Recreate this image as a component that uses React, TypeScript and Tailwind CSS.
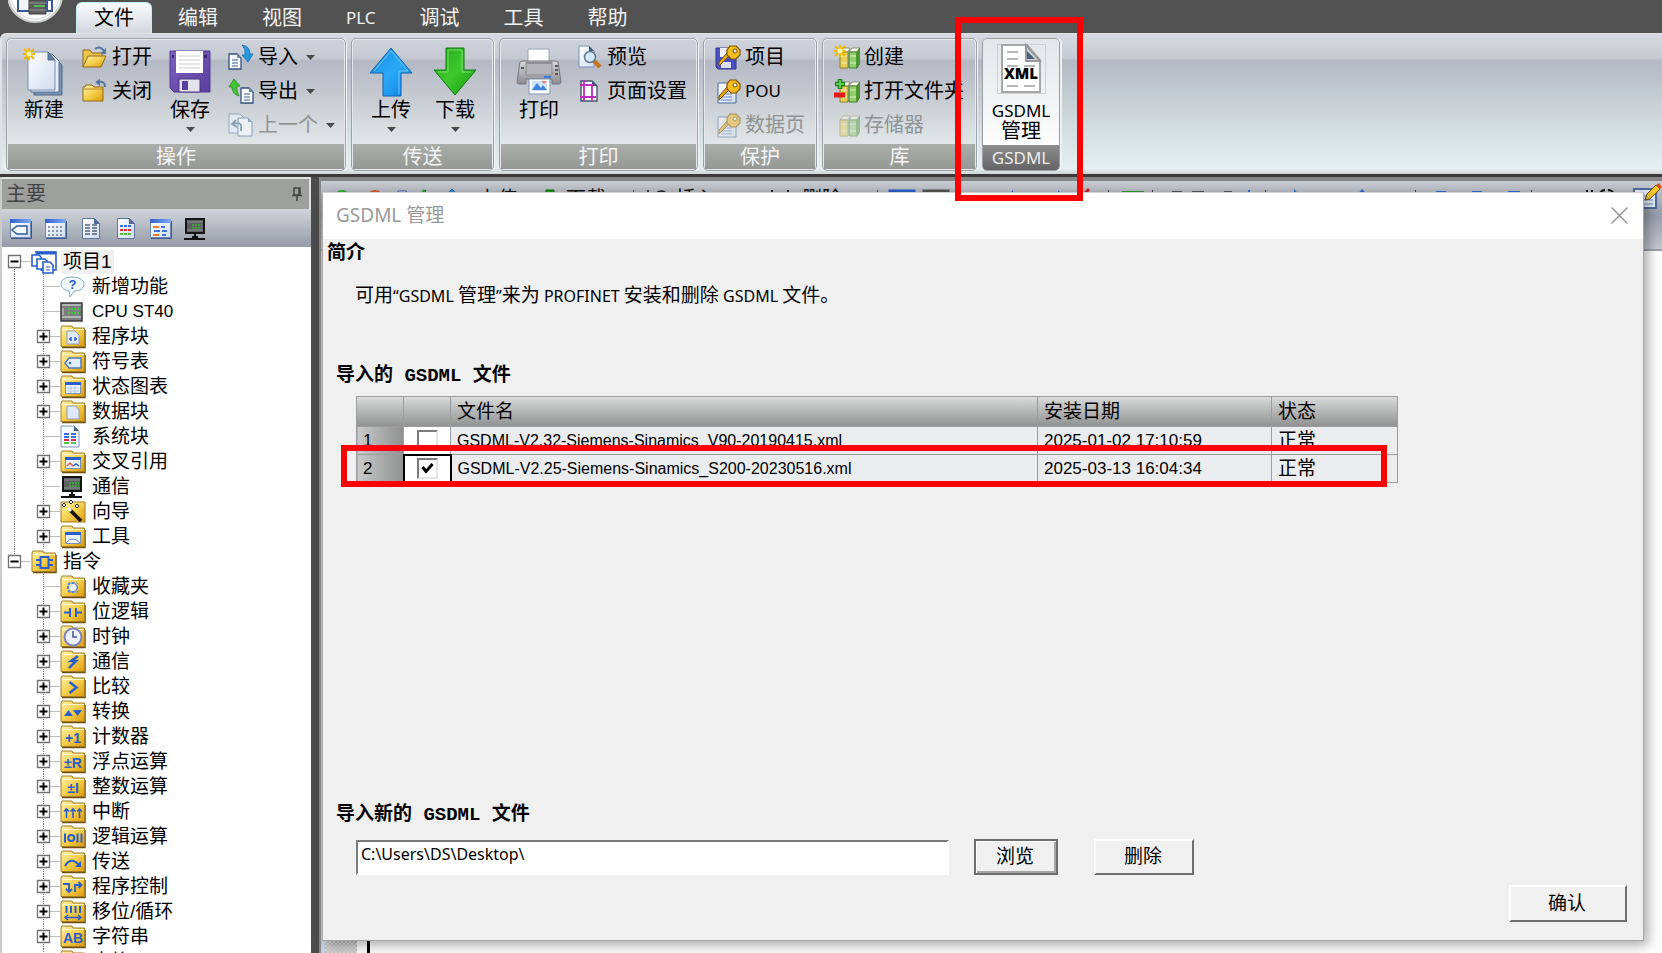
import React, { useState } from "react";

/* ---------- Gradients shared by the drawings ---------- */

function Defs() {
  return (
    <svg className="absolute h-0 w-0" aria-hidden="true">
      <defs>
        <linearGradient id="gold" x1="0" y1="0" x2="1" y2="1">
          <stop offset="0" stopColor="#fff3ae" />
          <stop offset="0.5" stopColor="#f5cf4e" />
          <stop offset="1" stopColor="#dd9a08" />
        </linearGradient>
        <linearGradient id="paper" x1="0" y1="0" x2="1" y2="1">
          <stop offset="0" stopColor="#ffffff" />
          <stop offset="1" stopColor="#cfdcf0" />
        </linearGradient>
        <linearGradient id="blueBar" x1="0" y1="0" x2="1" y2="0">
          <stop offset="0" stopColor="#2f62cf" />
          <stop offset="1" stopColor="#7fa8f2" />
        </linearGradient>
        <linearGradient id="upBlue" x1="0" y1="0" x2="1" y2="1">
          <stop offset="0" stopColor="#1787dc" />
          <stop offset="0.5" stopColor="#2aa9f8" />
          <stop offset="1" stopColor="#0f80de" />
        </linearGradient>
        <linearGradient id="downGreen" x1="0" y1="0" x2="1" y2="1">
          <stop offset="0" stopColor="#1fa31a" />
          <stop offset="0.5" stopColor="#3fc92c" />
          <stop offset="1" stopColor="#129a10" />
        </linearGradient>
        <linearGradient id="purple" x1="0" y1="0" x2="1" y2="1">
          <stop offset="0" stopColor="#7d5fc0" />
          <stop offset="1" stopColor="#5b3f9e" />
        </linearGradient>
        <linearGradient id="metal" x1="0" y1="0" x2="0" y2="1">
          <stop offset="0" stopColor="#d8d8dc" />
          <stop offset="1" stopColor="#8a8a90" />
        </linearGradient>
      </defs>
    </svg>
  );
}

/* ---------- Ribbon drawings ---------- */

const Spark = ({ x, y }: { x: number; y: number }) => (
  <g transform={`translate(${x} ${y})`} stroke="#f0b800" strokeWidth="2">
    <path d="M0 -6V6M-6 0H6M-5 -5L5 5M-5 5L5 -5" />
    <circle r="2.5" fill="#fff7b0" stroke="none" />
  </g>
);

const NewIcon = () => (
  <svg width="44" height="50" viewBox="0 0 44 50">
    <path d="M12 10h20l8 8v30H12z" fill="#7b93b3" stroke="#4d6788" />
    <path d="M9 7h21l7 7v31H9z" fill="#e6eefa" stroke="#56708f" />
    <path d="M6 5h20l7 8v30H6z" fill="url(#paper)" stroke="#7b8fae" />
    <path d="M26 5v8h7z" fill="#5f7fa6" stroke="#56708f" />
    <Spark x={7} y={7} />
  </svg>
);

const SaveIcon = () => (
  <svg width="44" height="50" viewBox="0 0 44 50">
    <path d="M2 4h40v41H6l-4-4z" fill="url(#purple)" stroke="#533a94" />
    <path d="M8 4h27v22H8z" fill="#fdfdfd" />
    <path d="M11 9h21M11 13h21M11 17h21M11 21h21" stroke="#cfcfd4" />
    <path d="M11 32h21v13H11z" fill="#e4e2ea" stroke="#4b3585" />
    <path d="M14 34h6v9h-6z" fill="#5b3f9e" />
    <path d="M36 8h3v3h-3zM4 8h2v3H4z" fill="#3d2878" />
  </svg>
);

const UpIcon = () => (
  <svg width="44" height="50" viewBox="0 0 44 50">
    <path d="M22 1L43 26H32V49H14V26H1z" fill="url(#upBlue)" stroke="#0c63b4" strokeLinejoin="round" />
    <path d="M22 4L39 24H30V47" fill="none" stroke="#7fd0ff" strokeWidth="1" opacity="0.8" />
    <path d="M5 24L22 4" stroke="#7fd0ff" opacity="0.8" />
  </svg>
);

const DownIcon = () => (
  <svg width="44" height="50" viewBox="0 0 44 50">
    <path d="M13 1H31V23H43L22 48L1 23H13z" fill="url(#downGreen)" stroke="#0c7a0c" strokeLinejoin="round" />
    <path d="M15 3H29V25H38" fill="none" stroke="#8be67a" opacity="0.8" />
    <path d="M5 25H15V3" fill="none" stroke="#8be67a" opacity="0.8" />
  </svg>
);

const PrinterIcon = () => (
  <svg width="46" height="50" viewBox="0 0 46 50">
    <path d="M12 2h21v14H12z" fill="#fff" stroke="#9aa3b3" />
    <path d="M4 15q1-1 3-1h32q2 0 3 1l3 20q0 2-2 2h-7V32H10v5H3q-2 0-2-2z" fill="url(#metal)" stroke="#77777d" />
    <path d="M10 15h26v13H10z" fill="#b4b4b9" stroke="#8b8b90" />
    <path d="M10 16h26" stroke="#8f8f95" strokeWidth="2" />
    <path d="M5 21h3M39 19h3M39 23h3M39 27h3" stroke="#55555a" strokeWidth="2" />
    <path d="M28 30h7" stroke="#2f7be0" strokeWidth="2" />
    <path d="M13 32h21v15H13z" fill="#fff" stroke="#7f93ad" />
    <path d="M16 34h15v10H16z" fill="#cfe4fb" />
    <path d="M16 43l5-7 4 5 2-3 4 5z" fill="#3d83e0" />
    <path d="M25 34l3 3 3-3z" fill="#f08060" />
  </svg>
);

const OpenIcon = () => (
  <svg width="26" height="24" viewBox="0 0 26 24">
    <path d="M1 22V5h7l2 3h10v4" fill="#f2c44a" stroke="#93691a" />
    <path d="M1 22L6 11h18l-5 11z" fill="url(#gold)" stroke="#93691a" />
    <path d="M13 4q5-4 9 2" fill="none" stroke="#53779e" strokeWidth="2" />
    <path d="M24 3v6h-6z" fill="#53779e" />
  </svg>
);

const CloseIcon = () => (
  <svg width="26" height="24" viewBox="0 0 26 24">
    <path d="M1 22V8h2l1-2h6l2 2h9v14z" fill="url(#gold)" stroke="#93691a" />
    <path d="M1 10h20" stroke="#b9872a" />
    <path d="M17 3q6-1 6 5" fill="none" stroke="#53779e" strokeWidth="2" />
    <path d="M18 0v7l-5-4z" fill="#53779e" />
  </svg>
);

const SmallPage = ({ x, y }: { x: number; y: number }) => (
  <g transform={`translate(${x} ${y})`}>
    <path d="M0 0h8l4 4v11H0z" fill="#f7faff" stroke="#33517d" strokeWidth="1.3" />
    <path d="M8 0v4h4z" fill="#6d8bb5" />
    <path d="M3 6h6M3 9h6M3 12h6" stroke="#3a5c92" />
  </g>
);

const ImportIcon = () => (
  <svg width="26" height="26" viewBox="0 0 26 26">
    <SmallPage x={1} y={10} />
    <path d="M14 1q8 1 8 9h3l-5 8-6-7h3q1-6-3-10z" fill="#2a97e0" stroke="#1869ae" strokeWidth="0.8" />
  </svg>
);

const ExportIcon = () => (
  <svg width="26" height="26" viewBox="0 0 26 26">
    <SmallPage x={13} y={10} />
    <path d="M11 18Q4 16 4 9H1L6 1l6 7H9q-1 5 2 10z" fill="#43c433" stroke="#1f8d1b" strokeWidth="0.8" />
  </svg>
);

const PrevIcon = () => (
  <svg width="26" height="26" viewBox="0 0 26 26" opacity="0.75">
    <path d="M1 2h11l4 4v15H1z" fill="#e8eff8" stroke="#8397b2" />
    <path d="M10 6h10l4 4v14H10z" fill="#f4f8fc" stroke="#6f86a6" />
    <path d="M20 6v4h4z" fill="#7f96b3" />
    <path d="M13 19v-6q-2-3-8-1M8 8l-4 4 5 3" fill="none" stroke="#6f8bad" strokeWidth="1.8" />
  </svg>
);

const PreviewIcon = () => (
  <svg width="26" height="26" viewBox="0 0 26 26">
    <path d="M2 2h10l5 5v16H2z" fill="url(#paper)" stroke="#7d92b0" />
    <path d="M12 2v5h5z" fill="#3d5a80" />
    <path d="M17 17l6 6" stroke="#c8701a" strokeWidth="4" />
    <circle cx="13" cy="13" r="5.5" fill="#d3e8fa" stroke="#62788f" strokeWidth="1.5" />
  </svg>
);

const PageSetupIcon = () => (
  <svg width="26" height="26" viewBox="0 0 26 26">
    <path d="M4 3h11l5 5v15H4z" fill="#fff" stroke="#44546e" strokeWidth="1.4" />
    <path d="M15 3v5h5z" fill="#44546e" />
    <path d="M7 2v21M15 6v17M3 7h13M3 19h16" stroke="#c22bc0" strokeWidth="1.8" />
  </svg>
);

const Key = () => (
  <g>
    <path d="M14 12L4 22v-4L13 8z" fill="#e9a90e" stroke="#7d5200" strokeWidth="1" />
    <path d="M15 2h6l4 4v5l-4 4h-5l-4-4V6z" fill="#f7bd1c" stroke="#7d5200" strokeWidth="1.2" />
    <circle cx="20" cy="7" r="2" fill="#fff" stroke="#7d5200" />
  </g>
);

const KeyDiskIcon = () => (
  <svg width="26" height="26" viewBox="0 0 26 26">
    <path d="M1 4h20v21H3l-2-2z" fill="#4a4fc2" stroke="#31348f" />
    <path d="M5 4h12v9H5z" fill="#f1f1fa" />
    <path d="M6 18h10v6H6z" fill="#dcdcf0" />
    <Key />
  </svg>
);

const KeyPageIcon = ({ faded = false }: { faded?: boolean }) => (
  <svg width="26" height="26" viewBox="0 0 26 26" opacity={faded ? 0.5 : 1}>
    <path d="M3 5h13l5 5v15H3z" fill="url(#paper)" stroke="#4c6a96" />
    <path d="M6 16h11M6 19h11M6 22h11" stroke="#6a8abf" />
    <Key />
  </svg>
);

const Books = () => (
  <g>
    <path d="M6 8l3-4h7l-2 4zM15 8l3-4h8l-3 4z" fill="#fdfdf3" stroke="#8f8f70" />
    <path d="M6 8h8v16H6z" fill="#e5cf57" stroke="#92802a" />
    <path d="M15 8h8v16h-8z" fill="#8fce68" stroke="#42832a" />
    <path d="M23 8l3-4v15l-3 5z" fill="#4f9b35" stroke="#42832a" />
    <path d="M7 12h6M16 12h6M7 19h6M16 19h6" stroke="#fff" opacity="0.7" />
  </g>
);

const LibNewIcon = () => (
  <svg width="26" height="26" viewBox="0 0 26 26">
    <Books />
    <Spark x={6} y={7} />
  </svg>
);
const LibOpenIcon = () => (
  <svg width="26" height="26" viewBox="0 0 26 26">
    <Books />
    <path d="M6 1v10M1 6h10" stroke="#1d7d1d" strokeWidth="4.5" />
    <path d="M6 2v8M2 6h8" stroke="#5fd04d" strokeWidth="2" />
    <path d="M0 17h11" stroke="#e01818" strokeWidth="5" />
  </svg>
);
const LibMemIcon = () => (
  <svg width="26" height="26" viewBox="0 0 26 26" opacity="0.45">
    <Books />
  </svg>
);

const XmlIcon = () => (
  <svg width="50" height="52" viewBox="0 0 50 52">
    <path d="M1.5 1.5h48v49h-48z" fill="none" stroke="#d0d0d2" />
    <path d="M6 2h25l13 15v32H6z" fill="#fff" stroke="#a6a6a8" strokeWidth="2" />
    <path d="M30 2v16h14z" fill="#d5d5d8" stroke="#98989c" strokeWidth="2" />
    <path d="M31 8l8 8h-8z" fill="#47627f" />
    <path d="M11 9h11M11 16h11M11 23h11M28 23h11M11 43h11M28 43h11" stroke="#b7b7ba" strokeWidth="2" />
    <text x="25" y="36" textAnchor="middle" fontSize="15" fontWeight="800" fontFamily="Open Sans, sans-serif" fill="#000">
      XML
    </text>
  </svg>
);

const Logo = () => (
  <svg width="56" height="24" viewBox="0 0 56 24">
    <circle cx="27" cy="-5" r="27" fill="#f3f4f4" stroke="#c9caca" strokeWidth="2" />
    <circle cx="27" cy="-5" r="24" fill="#fff" stroke="#dcdcdc" />
    <path d="M10 0v11h14V0" fill="#f2f6fc" stroke="#38598f" strokeWidth="2" />
    <path d="M21 0h17v14H21z" fill="#5c5f5e" stroke="#3d3f3e" />
    <path d="M26 6h11" stroke="#57b755" strokeWidth="2" />
    <path d="M21 3h17M21 10h17" stroke="#8d918f" />
    <path d="M39 0h5v11h-5z" fill="#fff" stroke="#38598f" strokeWidth="2" />
  </svg>
);

/* ---------- Ribbon building blocks ---------- */

const Caret = () => (
  <svg width="9" height="5" viewBox="0 0 9 5" aria-hidden="true">
    <path d="M0 0h9L4.500 5z" fill="#4a4a4a" />
  </svg>
);

function BigButton({ icon, label, menu = false }: { icon: React.ReactNode; label: string; menu?: boolean }) {
  return (
    <button type="button" className="flex w-15 flex-col items-center pt-1.5">
      <span className="flex h-[52px] items-center">{icon}</span>
      <span className="text-xl leading-6 whitespace-nowrap">{label}</span>
      {menu && (
        <span className="flex h-3.5 items-center">
          <Caret />
        </span>
      )}
    </button>
  );
}

function SmallButton({
  icon,
  label,
  menu = false,
  latin = false,
  disabled = false,
}: {
  icon: React.ReactNode;
  label: string;
  menu?: boolean;
  latin?: boolean;
  disabled?: boolean;
}) {
  return (
    <button
      type="button"
      disabled={disabled}
      className="flex h-[34px] items-center gap-1 whitespace-nowrap disabled:text-[#8f9496]"
    >
      {icon}
      <span className={latin ? "text-[17px] leading-6" : "text-xl leading-6"}>{label}</span>
      {menu && (
        <span className="ml-1">
          <Caret />
        </span>
      )}
    </button>
  );
}

const Stack = ({ children }: { children: React.ReactNode }) => <div className="flex flex-col">{children}</div>;

function Group({ label, width, pad, children }: { label: string; width: string; pad: string; children: React.ReactNode }) {
  return (
    <section
      aria-label={label}
      className={`flex flex-col overflow-hidden rounded-[5px] border border-[#9ea2a8] shadow-[inset_0_0_0_1px_#e6e9ec,1px_0_0_#f2f5f6] ${width}`}
    >
      <div
        className={`m-px mb-0 flex flex-1 items-start rounded-t bg-[linear-gradient(#ced2da_0,#c4c8d1_18%,#b4b9c4_20%,#c3c8cf_50%,#e1e7e8_100%)] ${pad}`}
      >
        {children}
      </div>
      <div className="mx-px mb-px h-[25px] bg-linear-to-b from-[#acaeac] to-[#969896] text-center text-xl leading-[25px] text-[#f4f4f4]">
        {label}
      </div>
    </section>
  );
}

function Ribbon() {
  return (
    <div className="flex h-[141px] gap-[5px] rounded-tl-md border-t border-l-2 border-[#dfe2e6] bg-[linear-gradient(#d6dae0_0,#c6cad2_17%,#b4bac5_19%,#c8d0d6_50%,#e6f0f0_96%,#d0d4d4_100%)] pt-1 pb-[3px] pl-1">
      <Group label="操作" width="w-[340px]" pad="gap-2 pl-1.5">
        <BigButton icon={<NewIcon />} label="新建" />
        <Stack>
          <SmallButton icon={<OpenIcon />} label="打开" />
          <SmallButton icon={<CloseIcon />} label="关闭" />
        </Stack>
        <BigButton icon={<SaveIcon />} label="保存" menu />
        <Stack>
          <SmallButton icon={<ImportIcon />} label="导入" menu />
          <SmallButton icon={<ExportIcon />} label="导出" menu />
          <SmallButton icon={<PrevIcon />} label="上一个" menu disabled />
        </Stack>
      </Group>
      <Group label="传送" width="w-[143px]" pad="gap-1 pl-2">
        <BigButton icon={<UpIcon />} label="上传" menu />
        <BigButton icon={<DownIcon />} label="下载" menu />
      </Group>
      <Group label="打印" width="w-[199px]" pad="gap-2 pl-2">
        <BigButton icon={<PrinterIcon />} label="打印" />
        <Stack>
          <SmallButton icon={<PreviewIcon />} label="预览" />
          <SmallButton icon={<PageSetupIcon />} label="页面设置" />
        </Stack>
      </Group>
      <Group label="保护" width="w-[114px]" pad="pl-2.5">
        <Stack>
          <SmallButton icon={<KeyDiskIcon />} label="项目" />
          <SmallButton icon={<KeyPageIcon />} label="POU" latin />
          <SmallButton icon={<KeyPageIcon faded />} label="数据页" disabled />
        </Stack>
      </Group>
      <Group label="库" width="w-[155px]" pad="pl-2.5">
        <Stack>
          <SmallButton icon={<LibNewIcon />} label="创建" />
          <SmallButton icon={<LibOpenIcon />} label="打开文件夹" />
          <SmallButton icon={<LibMemIcon />} label="存储器" disabled />
        </Stack>
      </Group>
      <section
        aria-label="GSDML"
        className="relative flex w-[78px] flex-col rounded-[5px] border border-[#9a9da1] shadow-[2px_0_0_#eef2f3]"
      >
        <button
          type="button"
          className="flex flex-1 flex-col items-center rounded-t bg-linear-to-b from-[#e4e6ea] to-[#fdfdfd] pt-1"
        >
          <XmlIcon />
          <span className="pt-1.5 text-[17px] leading-5">GSDML</span>
          <span className="text-xl leading-5">管理</span>
        </button>
        <div className="h-[25px] rounded-b bg-linear-to-b from-[#8e8f8e] to-[#636463] text-center text-[17px] leading-[25px] text-[#ececec]">
          GSDML
        </div>
        <div className="pointer-events-none absolute -top-[22px] -right-[24px] -bottom-[31px] -left-[28px] z-30 border-6 border-[#fe0000]" />
      </section>
    </div>
  );
}

const MENU = ["编辑", "视图", "PLC", "调试", "工具", "帮助"];

function MenuBar() {
  return (
    <nav aria-label="菜单" className="flex h-[33px] items-end bg-[#525252] pl-2">
      <button type="button" aria-label="应用程序菜单" className="self-start">
        <Logo />
      </button>
      <a
        href="#file"
        className="ml-3 flex h-[31px] items-center rounded-t-md border border-b-0 border-[#c5eef2] bg-linear-to-b from-[#fafbfc] to-[#d3d7de] px-[17px] text-xl text-black"
      >
        文件
      </a>
      <div className="ml-[26px] flex h-[31px] items-center gap-11 text-xl text-[#f2f2f2]">
        {MENU.map((m) => (
          <a key={m} href={"#" + m} className={m === "PLC" ? "text-[17px]" : "text-xl"}>
            {m}
          </a>
        ))}
      </div>
    </nav>
  );
}

/* ---------- Project tree ---------- */

const B = "#2a5fcb";

const Folder = ({ children }: { children?: React.ReactNode }) => (
  <svg width="26" height="24" viewBox="0 0 26 24" className="shrink-0">
    <path d="M2 22.500h23V5" fill="none" stroke="#6c5012" strokeWidth="1.5" />
    <path d="M1 21.500V3l1-2h10l1 2h11.500v18.500z" fill="url(#gold)" stroke="#a67d22" />
    <path d="M2 4.500h22" stroke="#fff8cf" />
    <g transform="translate(0 -1)">{children}</g>
  </svg>
);

const Glyph = ({ d, w = 2 }: { d: string; w?: number }) => <path d={d} fill="none" stroke={B} strokeWidth={w} />;
const Mark = ({ children }: { children: string }) => (
  <text x="13" y="19" textAnchor="middle" fontSize="14" fontWeight="700" fontFamily="Liberation Sans, sans-serif" fill={B}>
    {children}
  </text>
);
const Win = ({ children }: { children?: React.ReactNode }) => (
  <g>
    <path d="M5.500 8.500h15v11h-15z" fill="#e9f1fd" stroke="#7791bd" />
    <path d="M5 8h16v3H5z" fill={B} />
    {children}
  </g>
);

const ProjectIcon = () => (
  <svg width="26" height="24" viewBox="0 0 26 24" className="shrink-0" fill="#fff" stroke="#2a5fcb" strokeWidth="1.6">
    <path d="M5 2h20v18H10z" />
    <path d="M5 3h20" strokeWidth="3" />
    <path d="M1 5h7l2 2v9H1z" />
    <path d="M6 9h8l2 2v8H6z" />
    <path d="M12 12h7l3 3v8H12z" />
    <path d="M15 17h4M15 20h4" strokeWidth="1" />
  </svg>
);
const HelpIcon = () => (
  <svg width="26" height="24" viewBox="0 0 26 24" className="shrink-0">
    <path d="M12 2C6 2 1 4.500 1 9s4 6 8 7l1 6 4-6c6 0 10-2.500 10-7S18 2 12 2z" fill="#eef8fd" stroke="#86a9bd" />
    <text x="12.500" y="14" textAnchor="middle" fontSize="13" fontWeight="700" fontFamily="Liberation Sans, sans-serif" fill={B}>
      ?
    </text>
  </svg>
);
const CpuIcon = () => (
  <svg width="26" height="24" viewBox="0 0 26 24" className="shrink-0">
    <path d="M1 3h21v18H1z" fill="#7c7e7e" stroke="#3b3b3b" strokeWidth="1.500" />
    <path d="M2 5h19M2 17h19" stroke="#b2b4b4" strokeWidth="2" />
    <path d="M8 9h12M8 13h12" stroke="#2fdc2f" strokeWidth="1.500" strokeDasharray="2 1" />
    <path d="M3 8v7" stroke="#a9a9a9" strokeWidth="2" />
  </svg>
);
const SystemIcon = () => (
  <svg width="26" height="24" viewBox="0 0 26 24" className="shrink-0">
    <path d="M1 1h13l5 5v16H1z" fill="#f3f8ff" stroke="#7f96b8" />
    <path d="M14 1v5h5z" fill="#3d5c8f" />
    <g strokeWidth="2">
      <path d="M4 9h5M11 9h5M4 12h5M11 12h5" stroke="#3670e0" />
      <path d="M4 15h5M11 15h5" stroke="#e0264a" />
      <path d="M4 18h5M11 18h5" stroke="#57c53f" />
    </g>
  </svg>
);
const CommIcon = () => (
  <svg width="26" height="24" viewBox="0 0 26 24" className="shrink-0">
    <path d="M3 2h18v14H3z" fill="#5d6060" stroke="#151515" strokeWidth="2" />
    <path d="M4 5h16M4 13h16" stroke="#8d9090" />
    <path d="M9 8h10M9 11h10" stroke="#2fb92f" strokeWidth="1.500" strokeDasharray="2 1" />
    <path d="M12 16v5M9 20h6" stroke="#111" strokeWidth="2" />
    <path d="M1 22h21" stroke="#111" strokeWidth="2" />
  </svg>
);
const WizardIcon = () => (
  <svg width="26" height="24" viewBox="0 0 26 24" className="shrink-0">
    <path d="M1 2h24v20H1z" fill="url(#gold)" stroke="#a67d22" />
    <path d="M10 10l11 11" stroke="#111" strokeWidth="3.500" />
    <path d="M8 8l3 3" stroke="#fff" strokeWidth="3" />
    <path d="M4 3l2 2-2 2-2-2zM11 0l2 2-2 2-2-2zM17 4l2 2-2 2-2-2z" fill="#fff" stroke="#222" />
  </svg>
);

type Node = { label: string; icon: React.ReactNode; leaf?: boolean };

const PROJECT: Node[] = [
  { label: "新增功能", icon: <HelpIcon />, leaf: true },
  { label: "CPU ST40", icon: <CpuIcon />, leaf: true },
  {
    label: "程序块",
    icon: (
      <Folder>
        <path d="M7 7h8l4 4v9H7z" fill="#dfe9f8" stroke="#8b9fbe" />
        <Glyph d="M9 15h2v-2v4M17 15h-2v-2v4" w={1.5} />
      </Folder>
    ),
  },
  {
    label: "符号表",
    icon: (
      <Folder>
        <path d="M9 9h12v10H9l-4-5z" fill="#e3eefc" stroke="#4c78c8" strokeWidth="1.500" />
        <circle cx="10" cy="14" r="1.200" fill={B} />
      </Folder>
    ),
  },
  { label: "状态图表", icon: <Folder><Win><path d="M7 14h12M7 17h12M11 12v7M15 12v7" stroke="#b9c9e4" /></Win></Folder> },
  { label: "数据块", icon: <Folder><path d="M7 7h9l3 4v9H7z" fill="#dfe9f8" stroke="#8b9fbe" /></Folder> },
  { label: "系统块", icon: <SystemIcon />, leaf: true },
  {
    label: "交叉引用",
    icon: (
      <Folder>
        <Win>
          <path d="M7 17l3-3 3 3" fill="none" stroke="#e05a4a" strokeWidth="1.500" />
          <path d="M13 17l3-2 3 2" fill="none" stroke={B} strokeWidth="1.500" />
        </Win>
      </Folder>
    ),
  },
  { label: "通信", icon: <CommIcon />, leaf: true },
  { label: "向导", icon: <WizardIcon /> },
  { label: "工具", icon: <Folder><Win><path d="M6 19q7-8 14 0" fill="#fff" stroke="#5d86d3" /></Win></Folder> },
];

const INSTRUCTIONS: Node[] = [
  {
    label: "收藏夹",
    icon: (
      <Folder>
        <path d="M13 8v11M7 13.500h12M8.500 9l9 9M8.500 18l9-9" stroke="#4f86f0" strokeWidth="3" strokeDasharray="2 1" />
        <circle cx="13" cy="13.500" r="3.500" fill="#eaf3ff" />
      </Folder>
    ),
    leaf: true,
  },
  { label: "位逻辑", icon: <Folder><Glyph d="M4 13.500h6M10 9v9M16 9v9M16 13.500h6" /></Folder> },
  {
    label: "时钟",
    icon: (
      <Folder>
        <circle cx="13" cy="13" r="8.500" fill="#eef0fa" stroke="#7d83c4" strokeWidth="2" />
        <path d="M13 7v6h4" fill="none" stroke="#4a4f94" strokeWidth="1.500" />
      </Folder>
    ),
  },
  { label: "通信", icon: <Folder><Glyph d="M18 7l-7 5h5l-7 7" w={2.5} /></Folder> },
  { label: "比较", icon: <Folder><Glyph d="M9.500 8l7 5.500-7 5.500" w={2.5} /></Folder> },
  { label: "转换", icon: <Folder><path d="M4 17l4.500-6 4.500 6zM13 11h9l-4.500 6z" fill={B} /></Folder> },
  { label: "计数器", icon: <Folder><Mark>+1</Mark></Folder> },
  { label: "浮点运算", icon: <Folder><Mark>±R</Mark></Folder> },
  { label: "整数运算", icon: <Folder><Mark>±I</Mark></Folder> },
  { label: "中断", icon: <Folder><Glyph d="M6.500 19V10M13 19V10M19.500 19V10M4 12.500l2.500-2.500 2.500 2.500M10.500 12.500l2.500-2.500 2.500 2.500M17 12.500l2.500-2.500 2.500 2.500" w={1.600} /></Folder> },
  {
    label: "逻辑运算",
    icon: (
      <Folder>
        <Glyph d="M5 9.500v9M17.500 9.500v9M21.500 9.500v9" />
        <circle cx="11.300" cy="14" r="3" fill="none" stroke={B} strokeWidth="2" />
      </Folder>
    ),
  },
  { label: "传送", icon: <Folder><Glyph d="M5 17q6-10 14-1" /><path d="M15 18h6v-6z" fill={B} /></Folder> },
  { label: "程序控制", icon: <Folder><Glyph d="M3 10h6v8M6 15l3 3 3-3M15 18v-7h6M18.500 8l3 3-3 3" w={1.800} /></Folder> },
  { label: "移位/循环", icon: <Folder><Glyph d="M6.500 7v7M11 7v7M15.500 7v7M20 7v7" /><Glyph d="M5 18.500h16M8 16l-3 2.500 3 2.500M18 16l3 2.500-3 2.500" w={1.500} /></Folder> },
  { label: "字符串", icon: <Folder><Mark>AB</Mark></Folder> },
  { label: "表格", icon: <Folder><Win /></Folder> },
];

/* Dotted guides and the plus / minus box to the left of a tree entry. */
function Branch({
  root = false,
  leaf = false,
  open = false,
  outer = "none",
}: {
  root?: boolean;
  leaf?: boolean;
  open?: boolean;
  outer?: "none" | "down" | "up" | "full";
}) {
  const w = root ? 31 : 60;
  const cx = root ? 14.5 : 43.5;
  const outerLine = { none: "", down: "M14.5 12V25", up: "M14.5 0V12", full: "M14.5 0V25" }[outer];
  return (
    <svg width={w} height="25" viewBox={`0 0 ${w} 25`} className="shrink-0">
      <g stroke="#7a7a7a" strokeDasharray="1 1" fill="none">
        <path d={outerLine} />
        {!root && <path d="M43.500 0V25" />}
        <path d={`M${cx} 12.500H${w}`} />
      </g>
      {!leaf && (
        <g fill="none">
          <path d={`M${cx - 6} 6.500h12v12h-12z`} fill="#fff" stroke="#707070" strokeWidth="1.300" />
          <path d={`M${cx - 4} 12.500h8`} stroke="#000" strokeWidth="2" />
          {!open && <path d={`M${cx} 8.500v8`} stroke="#000" strokeWidth="2" />}
        </g>
      )}
    </svg>
  );
}

function TreeItem({ node, inner }: { node: Node; inner: boolean }) {
  const branch = <Branch leaf={node.leaf} outer={inner ? "full" : "none"} />;
  return (
    <li className="flex h-[25px] items-center">
      {node.leaf ? (
        branch
      ) : (
        <button type="button" aria-label={"展开 " + node.label}>
          {branch}
        </button>
      )}
      {node.icon}
      <span className="pl-1.5 whitespace-nowrap">
        {node.label === "CPU ST40" ? <span className="font-['Liberation_Sans'] text-[17px]">{node.label}</span> : node.label}
      </span>
    </li>
  );
}

function TreeRoot({
  label,
  icon,
  nodes,
  first = false,
}: {
  label: string;
  icon: React.ReactNode;
  nodes: Node[];
  first?: boolean;
}) {
  const [open, setOpen] = useState(true);
  return (
    <li>
      <div className="flex h-[25px] items-center">
        <button type="button" aria-label={(open ? "折叠 " : "展开 ") + label} onClick={() => setOpen(!open)}>
          <Branch root open={open} outer={first ? "down" : "up"} />
        </button>
        {icon}
        <span className={first ? "ml-1 bg-[#f0f0f0] px-0.5 leading-6" : "ml-1 px-0.5 leading-6"}>{label}</span>
      </div>
      {open && (
        <ul>
          {nodes.map((n) => (
            <TreeItem key={n.label} node={n} inner={first} />
          ))}
        </ul>
      )}
    </li>
  );
}

const ToolWin = ({ children }: { children: React.ReactNode }) => (
  <svg width="26" height="24" viewBox="0 0 26 24">
    <path d="M2.500 2.500h20v18h-20z" fill="url(#paper)" stroke="#6c87b5" />
    <path d="M2 2h21v4H2z" fill="url(#blueBar)" />
    <path d="M3 21.500h20.500V4" fill="none" stroke="#3d5a8c" />
    {children}
  </svg>
);
const ToolPage = ({ children }: { children: React.ReactNode }) => (
  <svg width="26" height="24" viewBox="0 0 26 24">
    <path d="M4.500 1.500h12l5 5v15h-17z" fill="url(#paper)" stroke="#5b769f" />
    <path d="M16 1v6h6z" fill="#4f6b98" />
    {children}
  </svg>
);

function Sidebar() {
  return (
    <aside className="flex w-[311px] shrink-0 flex-col overflow-hidden border-l-2 border-[#c9cbcd] bg-white">
      <header className="flex h-8 shrink-0 items-center justify-between border-t-2 border-r-2 border-[#e2e2e2] bg-[#9da09d] pr-1.5 pl-1 text-xl leading-6 text-[#444]">
        <h2>主要</h2>
        <button type="button" aria-label="固定面板">
          <svg width="12" height="14" viewBox="0 0 12 14" fill="none" stroke="#444" strokeWidth="1.500">
            <path d="M3 1h6v7H3zM1 8.500h10M6 9v5M8 1v7" />
          </svg>
        </button>
      </header>
      <div className="flex h-[38px] shrink-0 items-center gap-[9px] bg-linear-to-b from-[#d2d5da] to-[#949ca8] pt-0.5 pl-1.5">
        <button type="button" aria-label="符号">
          <ToolWin><path d="M9 9h10v8H9l-5-4z" fill="#f4f8ff" stroke="#315a9f" strokeWidth="1.500" /></ToolWin>
        </button>
        <button type="button" aria-label="状态图">
          <ToolWin><path d="M5 10h15M5 14h15M5 18h15" stroke="#6c7a94" strokeWidth="1.500" strokeDasharray="2 2" /></ToolWin>
        </button>
        <button type="button" aria-label="数据">
          <ToolPage><path d="M7 8h5M14 8h5M7 11h5M14 11h5M7 14h5M14 14h5M7 17h5M14 17h5" stroke="#52617c" strokeWidth="1.500" /></ToolPage>
        </button>
        <button type="button" aria-label="系统">
          <ToolPage>
            <path d="M7 9h11" stroke="#3670e0" strokeWidth="2" strokeDasharray="3 1" />
            <path d="M7 13h11" stroke="#ea2a3a" strokeWidth="2" strokeDasharray="3 1" />
            <path d="M7 17h11" stroke="#4fc23a" strokeWidth="2" strokeDasharray="3 1" />
          </ToolPage>
        </button>
        <button type="button" aria-label="引用">
          <ToolWin>
            <path d="M5 10h6M5 18h6" stroke="#ee7a2a" strokeWidth="2" />
            <path d="M13 10h4M6 14h6M14 14h5M14 18h4" stroke="#3f74e0" strokeWidth="2" />
          </ToolWin>
        </button>
        <button type="button" aria-label="通信">
          <CommIcon />
        </button>
      </div>
      <ul className="-ml-0.5 min-h-0 flex-1 overflow-hidden pt-0.5 font-['Liberation_Sans','Noto_Sans_CJK_SC',sans-serif] text-[19px] leading-6">
        <TreeRoot label="项目1" icon={<ProjectIcon />} nodes={PROJECT} first />
        <TreeRoot
          label="指令"
          icon={<Folder><Glyph d="M9.500 8h8v11h-8zM5 11h4M5 16h4M18 11h4M18 16h4" /></Folder>}
          nodes={INSTRUCTIONS}
        />
      </ul>
    </aside>
  );
}

/* ---------- Editor pane behind the dialog ---------- */

function EditorPane() {
  return (
    <main className="flex min-w-0 flex-1 flex-col overflow-hidden bg-white">
      <div className="flex h-[74px] shrink-0 items-start overflow-hidden border-t-4 border-b-2 border-t-[#858585] border-b-[#9aa0aa] bg-[linear-gradient(#c9ccd2_0,#b4b8c0_20%,#979eab_50%,#c3c9d1_100%)] pt-0.5 text-xl leading-6 whitespace-nowrap text-[#111]">
        <svg width="149" height="24" viewBox="0 0 149 24" className="shrink-0">
          <circle cx="21" cy="15" r="8" fill="#2fae2f" />
          <circle cx="54" cy="15" r="8" fill="#d8572f" />
          <path d="M77 8h8l5 5v10H77z" fill="#dfe8f5" stroke="#3a5f9f" />
          <path d="M92 13l4 5 8-11" stroke="#28a428" strokeWidth="3" fill="none" />
          <path d="M104.500 7v16" stroke="#555" />
          <path d="M131 6l9 10h-5v8h-8v-8h-5z" fill="#2a93e0" stroke="#155f9f" />
        </svg>
        <span className="w-[72px] pt-1 pl-2">上传</span>
        <svg width="24" height="24" viewBox="0 0 24 24" className="shrink-0">
          <path d="M4 7h8v8h5l-9 9-8-9h4z" fill="#1f9a1f" stroke="#0f6f0f" />
        </svg>
        <span className="w-[66px] pt-1">下载</span>
        <svg width="44" height="24" viewBox="0 0 44 24" className="shrink-0">
          <path d="M1.500 7v16" stroke="#555" />
          <path d="M16 7v8M24 10q6-4 10 0l-4 8z" fill="#3fb03f" stroke="#222" strokeWidth="1.500" />
        </svg>
        <span className="w-[92px] pt-1">插入</span>
        <svg width="34" height="24" viewBox="0 0 34 24" className="shrink-0">
          <path d="M4 7v12M12 9v10M20 7v8M27 9v9" stroke="#222" strokeWidth="2" />
        </svg>
        <span className="w-[74px] pt-1">删除</span>
        <svg width="320" height="24" viewBox="0 0 320 24" className="shrink-0">
          <path d="M1.500 7v16" stroke="#555" />
          <path d="M14 8h24v14H14z" fill="#e9f1fd" stroke="#2a5fcb" strokeWidth="3" />
          <path d="M48 8h24v14H48z" fill="#d9d9d9" stroke="#555" strokeWidth="3" />
          <path d="M129 15l8-8v16zM190 15l-8-8v16z" fill="#2a6fd8" />
          <path d="M202 6l11 12M213 6l-11 12" stroke="#d81e1e" strokeWidth="3" />
          <path d="M232.500 7v16M276.500 7v16" stroke="#444" />
          <path d="M246 8h22v14h-22z" fill="#2f9b35" />
          <path d="M296 9h10M316 9h4" stroke="#555" strokeWidth="2" />
        </svg>
        <svg width="420" height="24" viewBox="0 0 420 24" className="shrink-0">
          <path d="M0 9h8M28 9h8" stroke="#555" strokeWidth="2" />
          <path d="M53 7v10M48 12l5 6 5-6" stroke="#2a6fd8" strokeWidth="2" fill="none" />
          <path d="M69.500 7v16M219.500 7v16M335.500 7v16" stroke="#444" />
          <path d="M98 6l7 8h-7zM166 6l7 8h-14z" fill="#2a6fd8" />
          <path d="M240 9h10M276 9h10M312 9h12" stroke="#2a6fd8" strokeWidth="2" />
          <path d="M391 7v8M396 7v8M404 10q2-3 5-3M412 7q4 0 5 3" stroke="#111" strokeWidth="2" fill="none" />
        </svg>
        <svg width="30" height="32" viewBox="0 0 30 32" className="ml-auto shrink-0">
          <path d="M2 6h22v19H2z" fill="#e6eefb" stroke="#4d6c9f" strokeWidth="2" />
          <path d="M12 13h9M12 17h9M12 21h9" stroke="#6a8abf" />
          <path d="M13 17l2-6L24 2l4 4-10 10z" fill="#f4c62f" stroke="#6b4b10" />
          <path d="M24 2l3-2 3 4-2 2z" fill="#d8502a" />
        </svg>
      </div>
      <div className="flex min-h-0 flex-1">
        <div className="w-9 border-l-4 border-[#c9d4ea] bg-[repeating-conic-gradient(#dcdcdc_0_25%,#c2c2c2_0_50%)] bg-size-[4px_4px]" />
        <div className="ml-2.5 w-[3px] bg-black" />
      </div>
    </main>
  );
}

/* ---------- GSDML dialog ---------- */

const FILES = [
  { name: "GSDML-V2.32-Siemens-Sinamics_V90-20190415.xml", date: "2025-01-02 17:10:59", state: "正常", on: false },
  { name: "GSDML-V2.25-Siemens-Sinamics_S200-20230516.xml", date: "2025-03-13 16:04:34", state: "正常", on: true },
];

const Latin = ({ children }: { children: string }) => <span className="text-[16px]">{children}</span>;

function FileTable() {
  const [on, setOn] = useState(FILES.map((f) => f.on));
  const cell = "border border-[#9c9c9c] px-1.5 py-0 text-left font-normal";
  return (
    <div className="relative mr-[245px] ml-5">
      <table className="w-full table-fixed border-collapse font-['Liberation_Sans','Noto_Sans_CJK_SC',sans-serif] text-[17px] leading-5">
        <colgroup>
          <col className="w-[47px]" />
          <col className="w-[47px]" />
          <col />
          <col className="w-[234px]" />
          <col className="w-[126px]" />
        </colgroup>
        <thead>
          <tr className="h-[30px] bg-linear-to-b from-[#d9dadb] to-[#8f908f] text-[19px]">
            <th className={cell} aria-label="序号" />
            <th className={cell} aria-label="选择" />
            <th className={cell}>文件名</th>
            <th className={cell}>安装日期</th>
            <th className={cell}>状态</th>
          </tr>
        </thead>
        <tbody>
          {FILES.map((f, i) => (
            <tr key={f.name} className="h-7 bg-[#ebecee]">
              <td className={cell + " bg-linear-to-r from-[#c9cacb] to-[#8f908f]"}>{i + 1}</td>
              <td className={f.on ? "border-2 border-black bg-white p-0" : "border border-[#9c9c9c] bg-white p-0"}>
                <label className="relative mx-auto flex size-[21px] items-center justify-center">
                  <input
                    type="checkbox"
                    aria-label={f.name}
                    checked={on[i]}
                    onChange={() => setOn(on.map((v, k) => (k === i ? !v : v)))}
                    className="size-[21px] appearance-none border-2 border-[#7b7b7b] border-r-[#e4e4e4] border-b-[#e4e4e4] bg-white"
                  />
                  {on[i] && (
                    <svg width="13" height="13" viewBox="0 0 13 13" className="pointer-events-none absolute">
                      <path d="M1.500 5l3.500 4.500L11.500 2" fill="none" stroke="#000" strokeWidth="3" />
                    </svg>
                  )}
                </label>
              </td>
              <td className={cell + " text-[16px]"}>{f.name}</td>
              <td className={cell}>{f.date}</td>
              <td className={cell + " text-[19px]"}>{f.state}</td>
            </tr>
          ))}
        </tbody>
      </table>
      <div className="pointer-events-none absolute top-[49px] right-[11px] -bottom-[3px] -left-[15px] border-6 border-[#fe0000]" />
    </div>
  );
}

const bevel = "border-2 border-t-white border-l-white border-r-[#6e6e6e] border-b-[#6e6e6e] bg-[#f0f0f0]";

function GsdmlDialog() {
  return (
    <div
      role="dialog"
      aria-labelledby="dlg-title"
      className="absolute top-[192px] right-[18px] bottom-3 left-[322px] z-10 flex flex-col border border-[#a5a5a5] border-t-[#d0d0d0] bg-[#f0f0f0] shadow-[4px_4px_12px_rgba(0,0,0,0.35)]"
    >
      <header className="flex h-[46px] shrink-0 items-center justify-between bg-white pr-[15px] pb-0.5 pl-[13px] text-[19px] text-[#999]">
        <h1 id="dlg-title">GSDML 管理</h1>
        <button type="button" aria-label="关闭">
          <svg width="17" height="17" viewBox="0 0 17 17" stroke="#8f8f8f" strokeWidth="1.300">
            <path d="M0.500 0.500l16 16M16.500 0.500l-16 16" />
          </svg>
        </button>
      </header>
      <div className="flex min-h-0 flex-1 flex-col pl-1 text-[19px] leading-6">
        <h2 className="pt-px font-bold">简介</h2>
        <p className="pt-[19px] pl-7">
          可用<Latin>“GSDML </Latin>管理<Latin>”</Latin>来为<Latin> PROFINET </Latin>安装和删除<Latin> GSDML </Latin>文件。
        </p>
        <div className="flex flex-1 flex-col pl-[9px]">
          <h2 className="pt-14 pb-2 font-['Liberation_Mono','Noto_Sans_CJK_SC',monospace] font-bold">导入的 GSDML 文件</h2>
          <FileTable />
          <h2 className="mt-auto pb-3 font-['Liberation_Mono','Noto_Sans_CJK_SC',monospace] font-bold">
            <label htmlFor="path">导入新的 GSDML 文件</label>
          </h2>
          <div className="flex items-center pl-5">
            <input
              id="path"
              type="text"
              defaultValue="C:\Users\DS\Desktop\"
              className="h-[35px] w-[593px] border-2 border-[#7a7a7a] border-r-white border-b-white bg-white px-[3px] pb-1.5 text-[16px] leading-6"
            />
            <button
              type="button"
              className="ml-[25px] h-9 w-[84px] border-2 border-[#6e6e6e] bg-[#f0f0f0] pr-0.5 pb-0.5 shadow-[inset_1px_1px_0_#fff,inset_-2px_-2px_0_#a5a5a5]"
            >
              浏览
            </button>
            <button type="button" className={"ml-9 h-9 w-[100px] pr-0.5 pb-0.5 " + bevel}>
              删除
            </button>
          </div>
          <div className="flex justify-end pt-2.5 pr-4 pb-[18px]">
            <button type="button" className={"h-[37px] w-[118px] pr-0.5 pb-0.5 " + bevel}>
              确认
            </button>
          </div>
        </div>
      </div>
    </div>
  );
}

export default function App() {
  return (
    <div className="relative flex h-screen flex-col overflow-hidden bg-[#4c4c4c] font-['Noto_Sans','Noto_Sans_CJK_SC',sans-serif] text-black">
      <Defs />
      <MenuBar />
      <Ribbon />
      <div className="h-[3px] shrink-0 bg-[#3a3a3a]" />
      <div className="flex min-h-0 flex-1">
        <Sidebar />
        <div className="w-[10px] shrink-0 border-r-2 border-[#8a8a8a] bg-[#4c4c4c]" />
        <EditorPane />
      </div>
      <GsdmlDialog />
    </div>
  );
}
